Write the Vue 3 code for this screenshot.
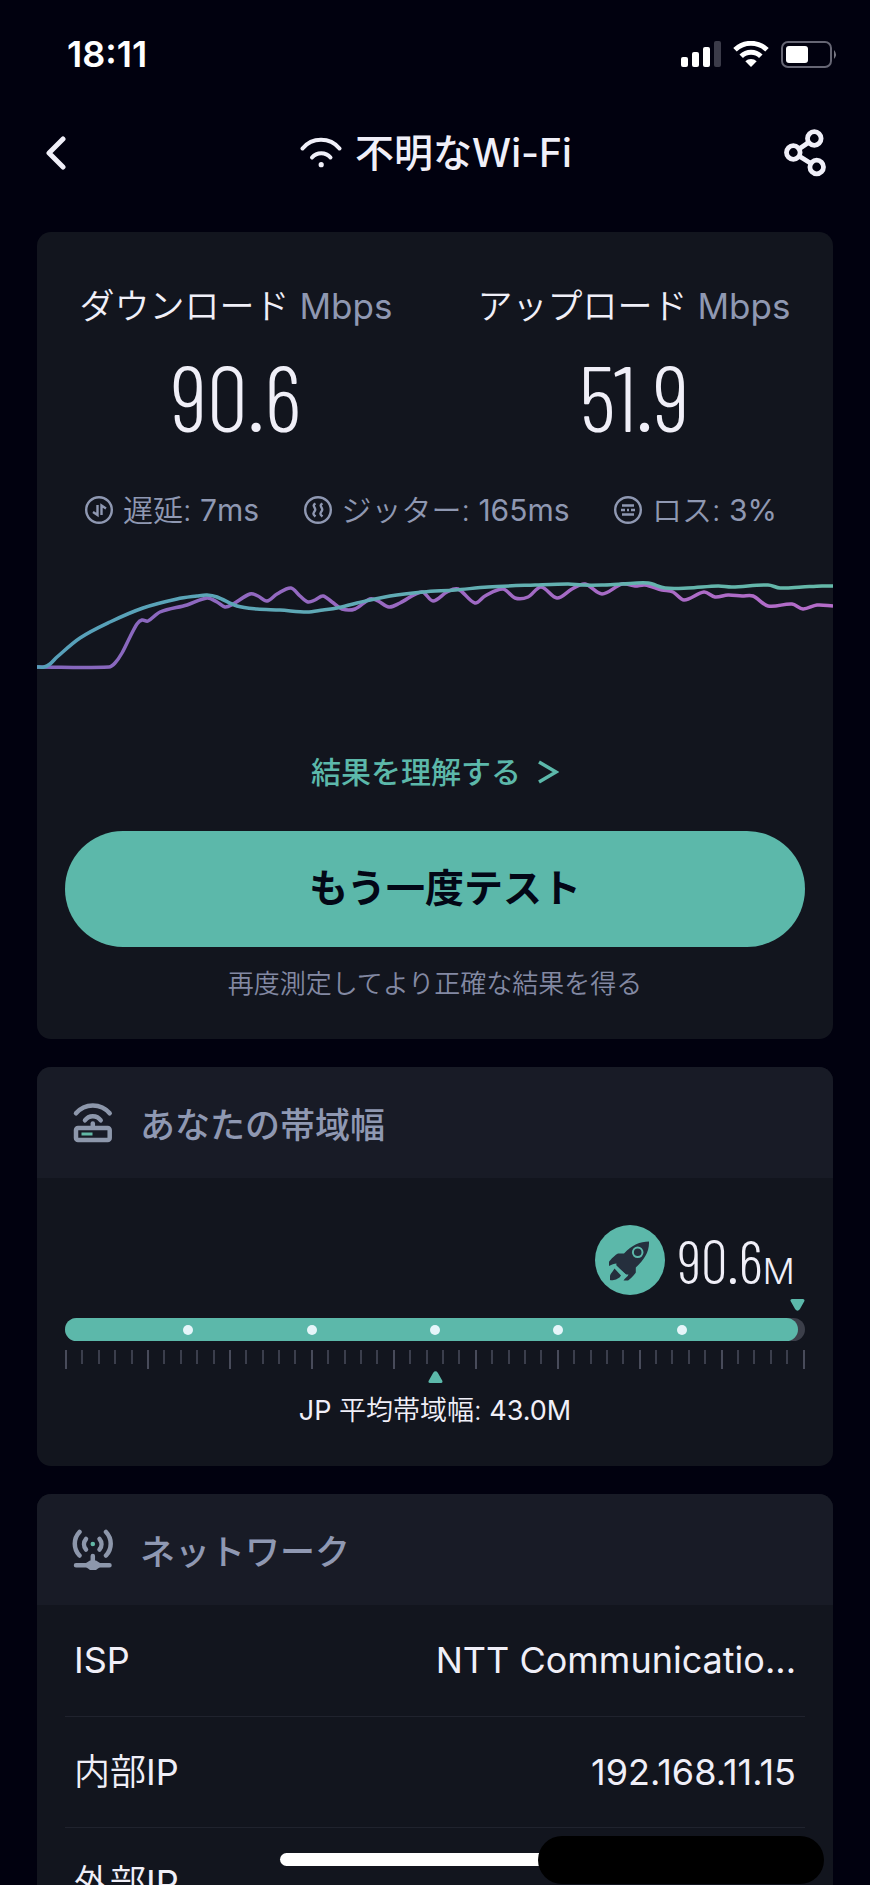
<script setup>
const downloadPoints = [
  [0, 97], [7, 97], [13, 94], [20, 87], [43, 68], [73, 52], [106, 38], [140, 29], [160, 26], [170, 25],
  [180, 27], [200, 36], [220, 39], [243, 40], [270, 42], [286, 40], [300, 38], [320, 33], [353, 26],
  [386, 22], [418, 20], [451, 17], [498, 15], [531, 14], [545, 15], [565, 15], [585, 14], [611, 13],
  [628, 18], [651, 18], [681, 16], [695, 17], [731, 15], [743, 18], [765, 17], [785, 16], [796, 16]
]
const uploadPoints = [
  [0, 97], [72, 97], [78, 93], [85, 83], [93, 67], [100, 54], [105, 50], [111, 51], [123, 42], [150, 35],
  [170, 28], [180, 32], [188, 37], [196, 34], [213, 24], [221, 26], [230, 31], [240, 24], [254, 18],
  [263, 26], [271, 32], [278, 30], [286, 26], [295, 32], [305, 39], [318, 39], [333, 29], [341, 31],
  [352, 37], [363, 33], [385, 22], [396, 31], [410, 22], [421, 19], [438, 33], [448, 26], [466, 19],
  [478, 28], [491, 27], [504, 17], [520, 28], [535, 19], [548, 14], [565, 24], [585, 14], [598, 16],
  [608, 15], [625, 20], [636, 22], [647, 30], [667, 22], [678, 27], [691, 25], [705, 26], [716, 26],
  [731, 36], [755, 34], [766, 39], [780, 35], [796, 36]
]

function smooth(points) {
  let d = `M${points[0][0]} ${points[0][1]}`
  for (let i = 0; i < points.length - 1; i++) {
    const before = points[Math.max(i - 1, 0)]
    const from = points[i]
    const to = points[i + 1]
    const after = points[Math.min(i + 2, points.length - 1)]
    const span = (to[0] - from[0]) / 3
    const slopeA = (to[1] - before[1]) / (to[0] - before[0])
    const slopeB = (after[1] - from[1]) / (after[0] - from[0])
    d += ` C${from[0] + span} ${from[1] + slopeA * span} ${to[0] - span} ${to[1] - slopeB * span} ${to[0]} ${to[1]}`
  }
  return d
}

const downloadPath = smooth(downloadPoints)
const uploadPath = smooth(uploadPoints)
const speeds = [
  { label: 'ダウンロード', value: '90.6' },
  { label: 'アップロード', value: '51.9' }
]
const rows = [
  { prefix: '', label: 'ISP', value: 'NTT Communicatio...' },
  { prefix: '内部', label: 'IP', value: '192.168.11.15' },
  { prefix: '外部', label: 'IP', value: '' }
]
</script>

<template>
  <div class="screen">
    <div class="status">
      <span class="time">18:11</span>
      <div class="indicators">
        <svg width="40" height="26" viewBox="0 0 40 26" aria-hidden="true">
          <g fill="#fff">
            <rect x="0" y="16" width="7" height="10" rx="2" />
            <rect x="11" y="11" width="7" height="15" rx="2" />
            <rect x="22" y="6" width="7" height="20" rx="2" />
          </g>
          <rect x="33" y="0" width="7" height="26" rx="2" fill="#3b3b49" />
        </svg>
        <svg width="36" height="26" viewBox="0 0 36 26" aria-hidden="true">
          <g fill="none" stroke="#fff" stroke-width="5">
            <path d="M2 8.800A23 23 0 0 1 34 8.800" />
            <path d="M8.200 15.300A14 14 0 0 1 27.800 15.300" />
          </g>
          <path d="M18 26L12.300 20.300A8 8 0 0 1 23.700 20.300Z" fill="#fff" />
        </svg>
        <svg width="57" height="27" viewBox="0 0 57 27" aria-hidden="true">
          <rect x="1" y="1" width="49" height="25" rx="6" fill="none" stroke="#666674" stroke-width="2" />
          <rect x="5" y="5" width="22" height="17" rx="3" fill="#fff" />
          <path d="M53 9Q57 13.500 53 18Z" fill="#777783" />
        </svg>
      </div>
    </div>

    <header class="nav">
      <button class="icon-button" type="button" aria-label="戻る">
        <svg width="20" height="34" viewBox="0 0 20 34"><path d="M17 3L3 17L17 31" fill="none" stroke="#f0eff8" stroke-width="5" stroke-linecap="round" stroke-linejoin="round" /></svg>
      </button>
      <h1 class="title">
        <svg width="42" height="32" viewBox="0 0 42 32" aria-hidden="true">
          <g fill="none" stroke="#f0eff8" stroke-width="4" stroke-linecap="round">
            <path d="M2.500 11.500A24 24 0 0 1 39.500 11.500" />
            <path d="M12 20.500A12 12 0 0 1 30.500 20.500" />
          </g>
          <circle cx="21.200" cy="27.700" r="2.600" fill="#f0eff8" />
        </svg>
        <span>不明なWi-Fi</span>
      </h1>
      <button class="icon-button" type="button" aria-label="共有">
        <svg width="42" height="48" viewBox="0 0 42 48">
          <g fill="none" stroke="#f0eff8" stroke-width="4.800">
            <circle cx="30.300" cy="9.500" r="6.800" />
            <circle cx="9.300" cy="23.500" r="6.800" />
            <circle cx="32.700" cy="38" r="6.800" />
            <path d="M15 20L24.500 13.500M15 27L27 34.500" />
          </g>
        </svg>
      </button>
    </header>

    <main class="content">
      <section class="card result">
        <div class="speeds">
          <div v-for="speed in speeds" :key="speed.label" class="speed">
            <div class="speed-label">{{ speed.label }} <span class="unit">Mbps</span></div>
            <div class="speed-value">{{ speed.value }}</div>
          </div>
        </div>

        <div class="metrics">
          <span class="metric">
            <svg class="metric-icon" viewBox="0 0 28 28" aria-hidden="true">
              <circle cx="14" cy="14" r="12.800" />
              <path d="M12.500 9V19L8 16M16.500 19V9.500L21 12.500" />
            </svg>
            <span>遅延: <span class="latin">7ms</span></span>
          </span>
          <span class="metric">
            <svg class="metric-icon" viewBox="0 0 28 28" aria-hidden="true">
              <circle cx="14" cy="14" r="12.800" />
              <path d="M11.500 7.500C7 10 12.500 11.500 11 14.500C9 17.500 8.500 18 11.500 20.500M18.500 7.500C14 10 19.500 11.500 18 14.500C16 17.500 15.500 18 18.500 20.500" />
            </svg>
            <span>ジッター: <span class="latin">165ms</span></span>
          </span>
          <span class="metric">
            <svg class="metric-icon" viewBox="0 0 28 28" aria-hidden="true">
              <circle cx="14" cy="14" r="12.800" />
              <path d="M8 9.500H20M7 14H11M13 14H15M17 14H21M8 18.500H20" />
            </svg>
            <span>ロス: <span class="latin">3%</span></span>
          </span>
        </div>

        <svg class="chart" viewBox="0 0 796 100" preserveAspectRatio="none" role="img" aria-label="速度の推移">
          <defs>
            <linearGradient id="upload-line" gradientUnits="userSpaceOnUse" x1="0" y1="0" x2="796" y2="0">
              <stop offset="0" stop-color="#8467bd" />
              <stop offset="1" stop-color="#b56cc9" />
            </linearGradient>
            <linearGradient id="download-line" gradientUnits="userSpaceOnUse" x1="0" y1="0" x2="796" y2="0">
              <stop offset="0" stop-color="#569fba" />
              <stop offset="0.500" stop-color="#62adb4" />
              <stop offset="1" stop-color="#65b9a9" />
            </linearGradient>
          </defs>
          <g fill="none" stroke-width="3.500">
            <path :d="uploadPath" stroke="url(#upload-line)" />
            <path :d="downloadPath" stroke="url(#download-line)" />
          </g>
        </svg>

        <a class="explain" href="#results">結果を理解する
          <svg width="22" height="24" viewBox="0 0 22 24" aria-hidden="true"><path d="M2 2L19 12L2 22" fill="none" stroke="currentColor" stroke-width="3.500" /></svg>
        </a>
        <button class="retest" type="button">もう一度テスト</button>
        <p class="hint">再度測定してより正確な結果を得る</p>
      </section>

      <section class="card">
        <h2 class="card-head">
          <svg width="44" height="42" viewBox="-3 -1 44 42" aria-hidden="true">
            <g fill="none" stroke="#8d97ab" stroke-width="4.500" stroke-linecap="round">
              <path d="M2 10.300A22 22 0 0 1 35.700 10.300" />
              <path d="M11 17.300A9.500 9.500 0 0 1 26.700 17.300" />
              <path d="M18.800 20.500V24" />
              <rect x="2" y="25" width="33.700" height="12" rx="2" />
            </g>
            <path d="M7.500 31H18.500" stroke="#62b8a6" stroke-width="3" />
          </svg>
          <span>あなたの帯域幅</span>
        </h2>
        <div class="bandwidth">
          <div class="reading">
            <svg width="70" height="70" viewBox="0 0 70 70" aria-hidden="true">
              <circle cx="35" cy="35" r="35" fill="#5cb8aa" />
              <g fill="#252f3d">
                <path d="M54 16.500C45 16.500 37 20 29 28.500H23C21 29 15 35 14 37V41C17 39.500 19 38.500 21.500 38.500L21 41.500L31 49.500L33.500 49.500C33 51.500 30 53 28.500 55.500H33C35 54.500 40 49 40.800 47.500V42.500C49 35 54.500 27 54 16.500Z" />
                <path d="M19.500 43.500L26 50.500L24.500 52.500L21 54.500C19 54.500 17 56 15 55V51C15 49 18 46.500 19.500 43.500Z" />
              </g>
              <path d="M19.500 40L31 51" stroke="#5cb8aa" stroke-width="2" />
              <circle cx="42.700" cy="27.300" r="4.800" fill="none" stroke="#5cb8aa" stroke-width="2" />
            </svg>
            <span class="reading-value">90.6<span class="reading-unit">M</span></span>
          </div>
          <div class="pointer-row current">
            <svg width="15" height="12" viewBox="0 0 15 12" aria-hidden="true"><path d="M2 1.500H13L8.500 9.500Q7.500 11 6.500 9.500Z" fill="#5cb8aa" stroke="#5cb8aa" stroke-width="3" stroke-linejoin="round" /></svg>
          </div>
          <div class="bar">
            <div class="fill"></div>
            <div class="dots"><i v-for="n in 5" :key="n" class="dot"></i></div>
          </div>
          <div class="ticks">
            <i v-for="n in 46" :key="n" class="tick" :class="{ major: n % 5 === 1 }"></i>
          </div>
          <div class="pointer-row average">
            <svg width="15" height="12" viewBox="0 0 15 12" aria-hidden="true"><path d="M2 10.500H13L8.500 2.500Q7.500 1 6.500 2.500Z" fill="#5cb8aa" stroke="#5cb8aa" stroke-width="3" stroke-linejoin="round" /></svg>
          </div>
          <p class="average-text"><span class="latin">JP</span> 平均帯域幅: <span class="latin">43.0M</span></p>
        </div>
      </section>

      <section class="card">
        <h2 class="card-head">
          <svg width="44" height="42" viewBox="0 0 44 42" aria-hidden="true">
            <g fill="none" stroke="#8d97ab" stroke-width="4.500" stroke-linecap="round">
              <path d="M8.500 3A17 17 0 0 0 8.500 26.500M35 3A17 17 0 0 1 35 26.500" />
              <path d="M15 10A8 8 0 0 0 15 20.500M28.500 10A8 8 0 0 1 28.500 20.500" />
              <path d="M21.800 27V33M5 36.200H38.500" />
            </g>
            <path d="M19 31.500H25L29 34V38L25 41H19L15 38V34Z" fill="#8d97ab" />
            <circle cx="21.800" cy="15" r="2.300" fill="#62b8a6" />
          </svg>
          <span>ネットワーク</span>
        </h2>
        <table class="network">
          <tbody>
            <tr v-for="row in rows" :key="row.prefix">
              <th scope="row">{{ row.prefix }}<span class="latin">{{ row.label }}</span></th>
              <td>{{ row.value }}</td>
            </tr>
          </tbody>
        </table>
      </section>
    </main>

    <div class="home-bar"></div>
    <div class="mask"></div>
  </div>
</template>

<style>
html,
body {
  background: #01010f;
}
</style>

<style scoped>
.screen {
  position: relative;
  display: flex;
  flex-direction: column;
  height: 100vh;
  overflow: hidden;
  background: #01010f;
  color: #f0eff8;
  font-family: Inter, "Noto Sans CJK JP", sans-serif;
}
.latin {
  font-weight: 400;
}
.status {
  flex: none;
  display: flex;
  align-items: center;
  justify-content: space-between;
  height: 108px;
  padding: 0 32px 0 67px;
  box-sizing: border-box;
}
.time {
  color: #fff;
  font-size: 36px;
  font-weight: 600;
}
.indicators {
  display: flex;
  align-items: center;
  gap: 12px;
}
.nav {
  flex: none;
  display: grid;
  grid-template-columns: 1fr auto 1fr;
  align-items: center;
  height: 90px;
  padding: 0 44px 0 46px;
}
.icon-button {
  justify-self: start;
  display: flex;
  padding: 0;
  border: 0;
  background: none;
}
.icon-button:last-child {
  justify-self: end;
}
.title {
  display: flex;
  align-items: center;
  gap: 13px;
  margin: 0;
  font-size: 39px;
  font-weight: 500;
  line-height: 48px;
}
.content {
  flex: 1;
  display: flex;
  flex-direction: column;
  gap: 28px;
  min-height: 0;
  padding: 34px 37px 0;
}
.card {
  flex: none;
  overflow: hidden;
  border-radius: 14px;
  background: #12151e;
}
.result {
  display: flex;
  flex-direction: column;
  padding: 50px 0 37px;
}
.speeds {
  display: grid;
  grid-template-columns: 1fr 1fr;
  text-align: center;
}
.speed-label {
  font-size: 35px;
  font-weight: 350;
  line-height: 48px;
}
.unit {
  color: #8f98b2;
  font-weight: 400;
}
.speed-value {
  margin-top: 25px;
  font-family: "Barlow Condensed", "Roboto Condensed", "Open Sans Condensed", Roboto, sans-serif;
  font-size: 92px;
  font-weight: 300;
  line-height: 80px;
}
.metrics {
  display: flex;
  justify-content: space-between;
  margin-top: 55px;
  padding: 0 56px 0 48px;
  color: #8f98b2;
  font-size: 30px;
  font-weight: 350;
  line-height: 40px;
}
.metric {
  display: flex;
  align-items: center;
  gap: 10px;
  white-space: nowrap;
}
.metric-icon {
  width: 28px;
  height: 28px;
  fill: none;
  stroke: #8f98b2;
  stroke-width: 2.4;
}
.chart {
  display: block;
  width: 100%;
  height: 100px;
  margin-top: 40px;
}
.explain {
  display: flex;
  align-items: center;
  align-self: center;
  gap: 16px;
  margin-top: 82px;
  color: #5cb8aa;
  font-size: 30px;
  font-weight: 500;
  line-height: 40px;
  text-decoration: none;
}
.retest {
  height: 116px;
  margin: 39px 28px 0;
  padding: 0 0 8px 20px;
  border: 0;
  border-radius: 58px;
  background: #5cb8aa;
  color: #030716;
  font: inherit;
  font-size: 39px;
  font-weight: 700;
}
.hint {
  margin: 19px 0 0;
  color: #8389a3;
  font-size: 26px;
  font-weight: 350;
  line-height: 36px;
  text-align: center;
}
.card-head {
  display: flex;
  align-items: center;
  gap: 25px;
  height: 111px;
  margin: 0;
  padding: 0 34px;
  background: #181b26;
  color: #8f98b2;
  font-size: 35px;
  font-weight: 500;
}
.bandwidth {
  padding: 47px 28px 37px;
}
.reading {
  display: flex;
  align-items: center;
  justify-content: flex-end;
  gap: 12px;
  height: 70px;
  padding-right: 10px;
}
.reading-value {
  font-family: "Barlow Condensed", "Roboto Condensed", "Open Sans Condensed", Roboto, sans-serif;
  font-size: 60px;
  font-weight: 300;
  line-height: 70px;
}
.reading-unit {
  font-family: Inter, sans-serif;
  font-size: 36px;
  font-weight: 350;
  line-height: 36px;
}
.pointer-row {
  display: flex;
  height: 12px;
}
.current {
  justify-content: flex-end;
  margin: 4px 0 7px;
}
.average {
  justify-content: center;
  margin-top: 2px;
}
.bar {
  position: relative;
  height: 23px;
  border-radius: 12px;
  background: #3c3f4a;
}
.fill {
  width: 99%;
  height: 100%;
  border-radius: 12px;
  background: #5cb8aa;
}
.dots {
  position: absolute;
  inset: 0;
  display: flex;
  align-items: center;
  justify-content: space-between;
  padding: 0 calc(100% / 6 - 5px);
}
.dot {
  width: 10px;
  height: 10px;
  border-radius: 50%;
  background: #e6f5fa;
}
.ticks {
  display: flex;
  justify-content: space-between;
  height: 19px;
  margin-top: 9px;
}
.tick {
  width: 2px;
  height: 14px;
  background: #3b3e4c;
}
.major {
  height: 19px;
  background: #484b5a;
}
.average-text {
  margin: 10px 0 0;
  font-size: 27px;
  font-weight: 350;
  line-height: 36px;
  text-align: center;
}
.network {
  width: calc(100% - 56px);
  margin: 0 28px;
  border-collapse: collapse;
  font-size: 36px;
  line-height: 48px;
}
.network tr {
  height: 111px;
  border-bottom: 1px solid #20232e;
}
.network th {
  padding: 0 0 0 9px;
  font-weight: 350;
  text-align: left;
}
.network td {
  padding: 0 9px 0 0;
  font-weight: 400;
  text-align: right;
}
.home-bar {
  position: absolute;
  bottom: 19px;
  left: 50%;
  width: 310px;
  height: 13px;
  margin-left: -155px;
  border-radius: 7px;
  background: #fff;
}
.mask {
  position: absolute;
  right: 46px;
  bottom: 1px;
  width: 286px;
  height: 48px;
  border-radius: 24px;
  background: #000;
}
</style>
